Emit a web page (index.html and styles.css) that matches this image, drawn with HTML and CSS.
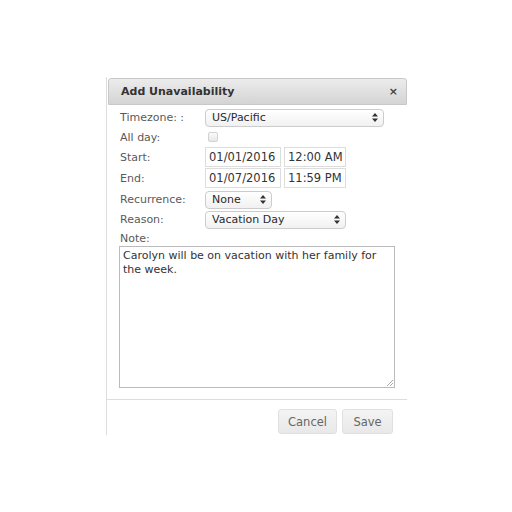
FILE: index.html
```html
<!DOCTYPE html>
<html>
<head>
<meta charset="utf-8">
<link rel="stylesheet" href="styles.css">
</head>
<body>
<div class="dialog">
  <div class="header">
    <span class="title">Add Unavailability</span>
    <span class="close">×</span>
  </div>
  <div class="body">
    <div class="row r-tz">
      <span class="label">Timezone: :</span>
      <div class="select w-tz"><span>US/Pacific</span><svg class="arrows" width="6" height="9" viewBox="0 0 6 9"><path d="M3 0L6 3.5H0Z M3 9L6 5.5H0Z" fill="#333"/></svg></div>
    </div>
    <div class="row r-all">
      <span class="label">All day:</span>
      <span class="checkbox"></span>
    </div>
    <div class="row r-start">
      <span class="label">Start:</span>
      <div class="pair"><span class="input w-date">01/01/2016</span><span class="input w-time">12:00 AM</span></div>
    </div>
    <div class="row r-end">
      <span class="label">End:</span>
      <div class="pair"><span class="input w-date">01/07/2016</span><span class="input w-time">11:59 PM</span></div>
    </div>
    <div class="row r-rec">
      <span class="label">Recurrence:</span>
      <div class="select w-rec"><span>None</span><svg class="arrows" width="6" height="9" viewBox="0 0 6 9"><path d="M3 0L6 3.5H0Z M3 9L6 5.5H0Z" fill="#333"/></svg></div>
    </div>
    <div class="row r-reason">
      <span class="label">Reason:</span>
      <div class="select w-reason"><span>Vacation Day</span><svg class="arrows" width="6" height="9" viewBox="0 0 6 9"><path d="M3 0L6 3.5H0Z M3 9L6 5.5H0Z" fill="#333"/></svg></div>
    </div>
    <div class="note-label">Note:</div>
    <div class="textarea">Carolyn will be on vacation with her family for the week.<svg class="grip" width="7" height="7" viewBox="0 0 7 7"><path d="M7 1L1 7M7 4L4 7" stroke="#aaa" stroke-width="1"/></svg></div>
  </div>
  <div class="footer">
    <span class="btn w-cancel">Cancel</span>
    <span class="btn w-save">Save</span>
  </div>
</div>
</body>
</html>
```
FILE: styles.css
```css
html, body {
  margin: 0;
  padding: 0;
  background: #fff;
}
body {
  font-family: "DejaVu Sans", Verdana, sans-serif;
  font-size: 11px;
  color: #5a5a5a;
}
.dialog {
  margin: 77px 0 0 106px;
  width: 300px;
  height: 358px;
  border-left: 1px solid #ddd;
  display: flex;
  flex-direction: column;
}
.header {
  height: 25px;
  margin-top: 1px;
  margin-left: 1px;
  border: 1px solid #c8c8c8;
  border-radius: 3px 3px 0 0;
  background: linear-gradient(#ececec, #d4d4d4);
  display: flex;
  align-items: center;
  justify-content: space-between;
  padding: 0 8px 0 12px;
}
.title {
  font-weight: bold;
  color: #333;
  font-size: 11px;
}
.close {
  font-weight: bold;
  color: #444;
  font-size: 11px;
}
.body {
  padding: 3px 0 0 13px;
  display: flex;
  flex-direction: column;
}
.row {
  display: flex;
  align-items: center;
}
.label {
  width: 85px;
  flex: none;
}
.r-tz { height: 19px; }
.r-all { height: 20px; }
.r-start { height: 20px; }
.r-end { height: 20px; margin-top: 1px; }
.r-rec { height: 19px; margin-top: 2px; }
.r-reason { height: 19px; margin-top: 1px; }
.select {
  box-sizing: border-box;
  height: 18px;
  border: 1px solid #ccc;
  border-radius: 4px;
  background: linear-gradient(#fff, #f1f1f1);
  display: flex;
  align-items: center;
  justify-content: space-between;
  padding: 0 5px 0 6px;
  color: #2a2a2a;
  font-size: 11px;
}
.arrows { flex: none; }
.w-tz { width: 179px; }
.w-rec { width: 67px; }
.w-reason { width: 141px; }
.checkbox {
  display: block;
  width: 8px;
  height: 8px;
  margin-left: 3px;
  margin-top: 0;
  border: 1px solid #d2d2d2;
  border-radius: 2px;
  background: linear-gradient(#fafafa, #e8e8e8);
}
.pair {
  display: flex;
  gap: 3px;
}
.input {
  box-sizing: border-box;
  height: 20px;
  border: 1px solid #ddd;
  display: flex;
  align-items: center;
  padding-left: 3px;
  color: #333;
  font-size: 11.5px;
}
.w-date { width: 76px; }
.w-time { width: 62px; }
.note-label {
  height: 15px;
  line-height: 15px;
  margin-top: 2px;
}
.textarea {
  position: relative;
  box-sizing: border-box;
  width: 276px;
  height: 142px;
  margin-left: -1px;
  border: 1px solid #bbb;
  padding: 2px 3px;
  color: #333;
  font-size: 11px;
  line-height: 14px;
}
.grip {
  position: absolute;
  right: 1px;
  bottom: 1px;
}
.footer {
  margin-top: 11px;
  border-top: 1px solid #ddd;
  display: flex;
  justify-content: flex-end;
  gap: 5px;
  padding: 9px 14px 0 0;
}
.btn {
  box-sizing: border-box;
  height: 25px;
  border: 1px solid #e0e0e0;
  border-radius: 3px;
  background: linear-gradient(#f4f4f4, #e8e8e8);
  display: flex;
  align-items: center;
  justify-content: center;
  color: #666;
  font-size: 11.5px;
}
.w-cancel { width: 59px; }
.w-save { width: 51px; }
```
